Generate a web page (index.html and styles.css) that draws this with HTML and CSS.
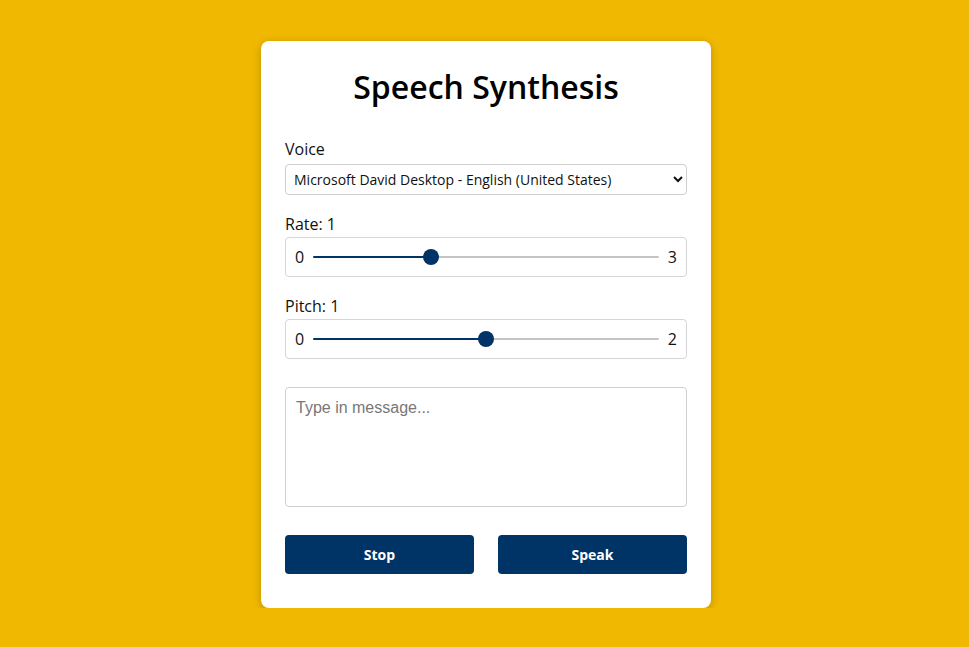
FILE: index.html
```html
<!DOCTYPE html>
<html lang="en">
<head>
<meta charset="utf-8">
<title>Speech Synthesis</title>
<link rel="stylesheet" href="styles.css">
</head>
<body>
  <div class="card">
    <h1 class="title">Speech Synthesis</h1>
    <label class="label label-voice" for="voice">Voice</label>
    <select id="voice" class="select">
      <option>Microsoft David Desktop - English (United States)</option>
    </select>

    <label class="label label-range" for="rate">Rate: 1</label>
    <div class="range-box">
      <span class="range-end">0</span>
      <input id="rate" class="range" type="range" min="0" max="3" step="0.1" value="1" style="--fill: 34.2%">
      <span class="range-end">3</span>
    </div>

    <label class="label label-range" for="pitch">Pitch: 1</label>
    <div class="range-box">
      <span class="range-end">0</span>
      <input id="pitch" class="range" type="range" min="0" max="2" step="0.1" value="1" style="--fill: 50%">
      <span class="range-end">2</span>
    </div>

    <textarea class="message" placeholder="Type in message..."></textarea>

    <div class="actions">
      <button class="btn" type="button">Stop</button>
      <button class="btn" type="button">Speak</button>
    </div>
  </div>
</body>
</html>
```

FILE: styles.css
```css
html, body {
  margin: 0;
  padding: 0;
}

body {
  background: #f0b800;
  font-family: "Open Sans", "Noto Sans", sans-serif;
  color: #111;
  padding-top: 41px;
  padding-left: 3px;
}

.card {
  box-sizing: border-box;
  width: 450px;
  margin: 0 auto;
  background: #fff;
  border-radius: 8px;
  box-shadow: 0 2px 8px rgba(0, 0, 0, 0.22);
  padding: 24px 24px 34px;
  display: flex;
  flex-direction: column;
}

.title {
  margin: 0 0 29px;
  text-align: center;
  font-size: 32px;
  font-weight: 600;
  line-height: 44px;
  color: #000;
}

.label {
  display: block;
  font-size: 16px;
  line-height: 22px;
  color: #111;
}

.label-voice {
  margin-bottom: 4px;
}

.label-range {
  margin-top: 18px;
  margin-bottom: 2px;
}

.select {
  box-sizing: border-box;
  width: 100%;
  height: 31px;
  border: 1px solid #cfcfcf;
  border-radius: 4px;
  background: #fff;
  font-family: "Open Sans", "Noto Sans", sans-serif;
  font-size: 14px;
  color: #111;
  padding: 0 4px;
}

.range-box {
  box-sizing: border-box;
  height: 40px;
  border: 1px solid #d6d6d6;
  border-radius: 4px;
  display: flex;
  align-items: center;
  gap: 9px;
  padding: 0 9px;
}

.range-end {
  font-size: 16px;
  line-height: 22px;
  color: #111;
}

.range {
  -webkit-appearance: none;
  appearance: none;
  flex: 1;
  margin: 0;
  height: 16px;
  background: transparent;
}

.range::-webkit-slider-runnable-track {
  height: 2px;
  border-radius: 1px;
  background: linear-gradient(to right, #003366 0, #003366 var(--fill), #c4c4c4 var(--fill), #c4c4c4 100%);
}

.range::-webkit-slider-thumb {
  -webkit-appearance: none;
  appearance: none;
  width: 16px;
  height: 16px;
  border-radius: 50%;
  background: #003366;
  border: none;
  margin-top: -7px;
}

.message {
  box-sizing: border-box;
  width: 100%;
  height: 120px;
  margin-top: 28px;
  border: 1px solid #d0d0d0;
  border-radius: 4px;
  padding: 11px 10px 9px;
  font-family: "Liberation Sans", Arial, sans-serif;
  font-size: 16px;
  resize: none;
  color: #111;
}

.message::placeholder {
  color: #777;
}

.actions {
  display: flex;
  gap: 24px;
  margin-top: 28px;
}

.btn {
  flex: 1;
  height: 39px;
  border: none;
  border-radius: 4px;
  background: #003366;
  color: #fff;
  font-family: "Open Sans", "Noto Sans", sans-serif;
  font-size: 14px;
  font-weight: 700;
  cursor: pointer;
}
```
